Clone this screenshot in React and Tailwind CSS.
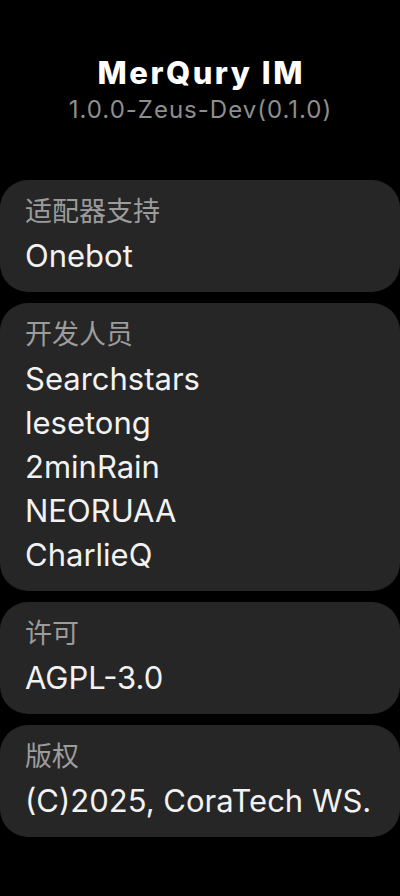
import React from 'react';

const SECTIONS = [
  { label: '适配器支持', values: ['Onebot'] },
  { label: '开发人员', values: ['Searchstars', 'lesetong', '2minRain', 'NEORUAA', 'CharlieQ'] },
  { label: '许可', values: ['AGPL-3.0'] },
  { label: '版权', values: ['(C)2025, CoraTech WS.'] },
];

function InfoCard({ label, values }) {
  return (
    <div className="rounded-[28px] bg-[#262626] pl-[25px] pr-4 pt-[10px] pb-[14px]">
      <div className="text-[27px] leading-[44px] text-[#9c9c9c]">{label}</div>
      {values.map(v => (
        <div key={v} className="text-[31px] leading-[44px] text-[#f2f2f2]">{v}</div>
      ))}
    </div>
  );
}

export default function App() {
  return (
    <div
      className="min-h-[896px] w-[400px] bg-black"
      style={{ fontFamily: 'Inter, "Noto Sans CJK SC", sans-serif' }}
    >
      <div className="flex flex-col items-center pt-[52px] pb-[54px]">
        <h1 className="text-[31px] leading-[42px] font-extrabold tracking-[2.5px] pl-[2.5px] text-white">MerQury IM</h1>
        <p className="text-[24px] leading-[32px] tracking-[1px] pl-[1px] text-[#8e8e8e]">1.0.0-Zeus-Dev(0.1.0)</p>
      </div>
      <div className="flex flex-col gap-[11px]">
        {SECTIONS.map(s => <InfoCard key={s.label} {...s} />)}
      </div>
    </div>
  );
}
